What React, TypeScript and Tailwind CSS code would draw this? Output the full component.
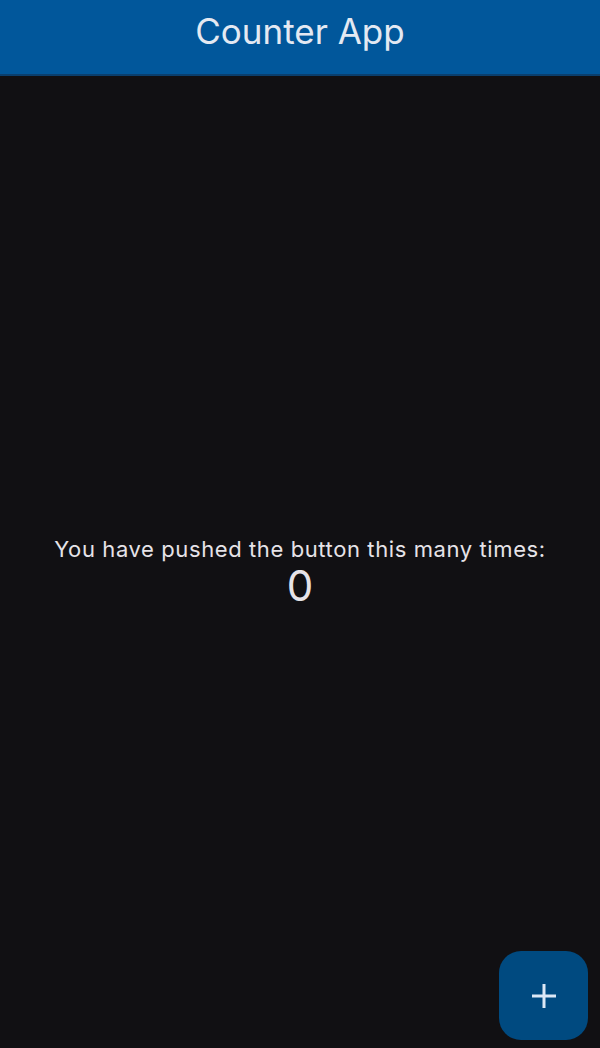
import React, { useState } from 'react';

export default function App() {
  const [count, setCount] = useState(0);

  return (
    <div className="relative flex h-[1048px] w-[600px] flex-col bg-[#111013] font-['Inter',sans-serif]">
      <header className="flex h-[76px] shrink-0 items-center justify-center border-b-2 border-[#0a3f6e] bg-[#01579b]">
        <h1 className="mb-[12px] text-[35px] font-normal leading-none text-[#e4e9f2]">Counter App</h1>
      </header>
      <main className="flex flex-1 flex-col items-center justify-center pt-[20px]">
        <p className="text-[22px] leading-[28px] tracking-[0.6px] text-[#e6e3e8]">
          You have pushed the button this many times:
        </p>
        <p className="text-[42px] leading-[46px] text-[#e6e3e8]">{count}</p>
      </main>
      <button
        onClick={() => setCount((c) => c + 1)}
        className="absolute bottom-[8px] right-[12px] flex h-[89px] w-[89px] items-center justify-center rounded-[22px] bg-[#004a80]"
      >
        <svg width="26" height="26" viewBox="0 0 26 26" fill="none">
          <path d="M13 1v24M1 13h24" stroke="#dce8f6" strokeWidth="3" />
        </svg>
      </button>
    </div>
  );
}
